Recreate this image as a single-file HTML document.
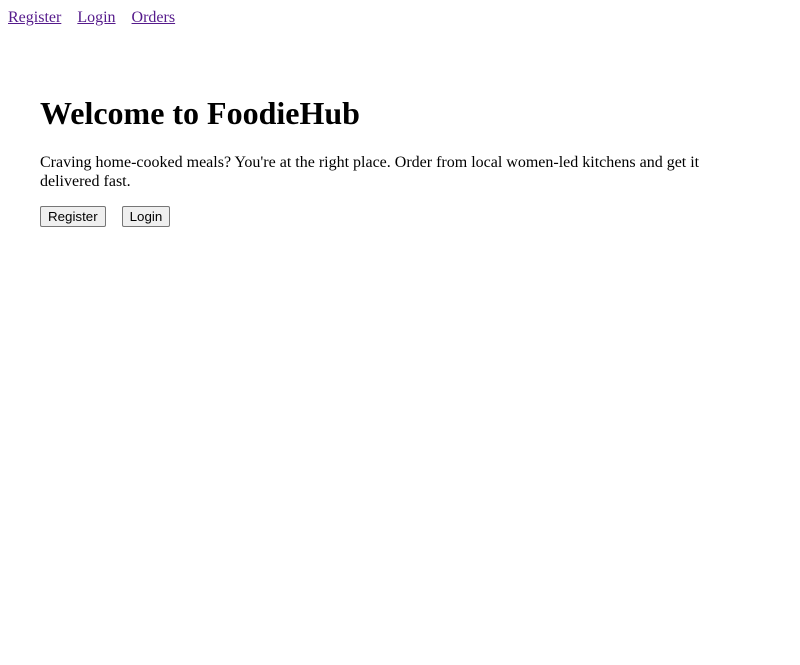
<!DOCTYPE html>
<html><head><style>
body{margin:9px 8px 8px 8px;font-family:"Liberation Serif",serif;font-size:16px;background:#fff;color:#000}
nav a{color:#551A8B;margin-right:12px}
.c{padding:68px 32px 0 32px}
h1{margin:0 0 21px 0;font-size:32px;line-height:37px}
p{margin:0 0 15px 0;line-height:19px}
button{font-family:"Liberation Sans",sans-serif;font-size:13.33px;margin-right:12px;padding:1px 7px;border:1px solid #767676;border-radius:2px;background:#efefef;height:21px}
</style></head><body>
<nav><a href="#">Register</a> <a href="#">Login</a> <a href="#">Orders</a></nav>
<div class="c">
<h1>Welcome to FoodieHub</h1>
<p>Craving home-cooked meals? You're at the right place. Order from local women-led kitchens and get it delivered fast.</p>
<button>Register</button> <button>Login</button>
</div>
</body></html>
